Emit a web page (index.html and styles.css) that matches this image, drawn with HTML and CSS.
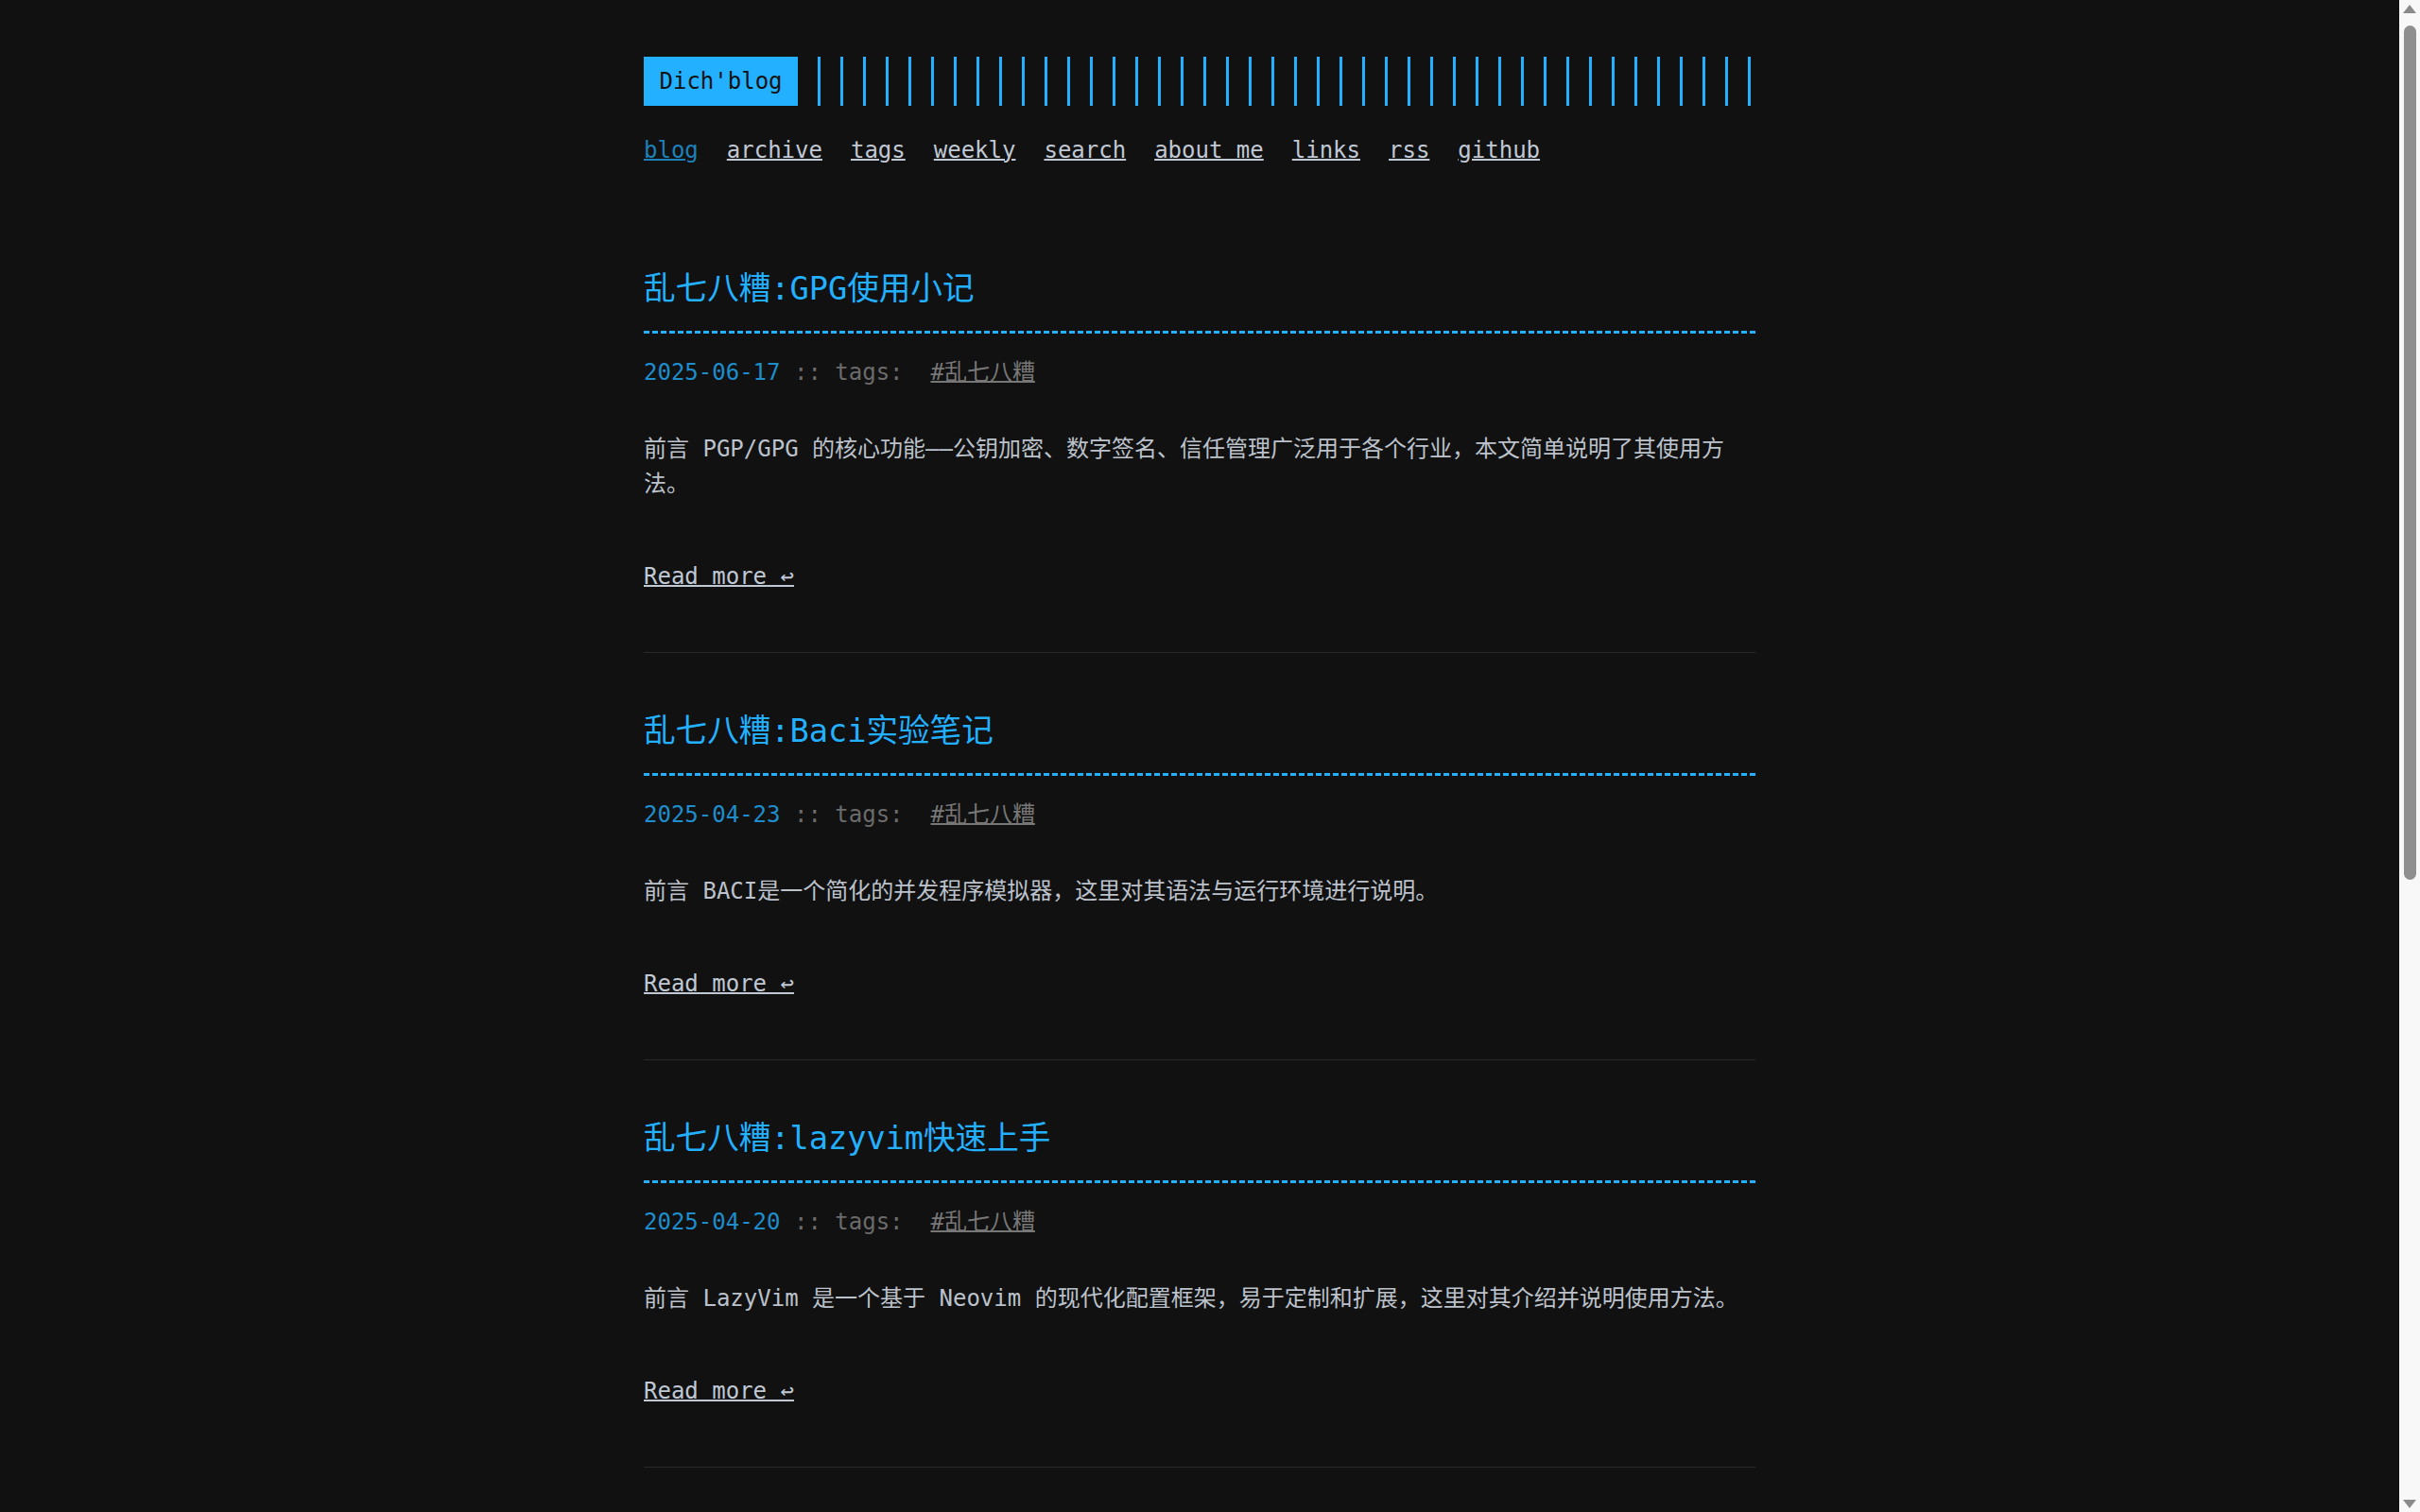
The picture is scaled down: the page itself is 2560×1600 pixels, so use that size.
FILE: index.html
```html
<!DOCTYPE html>
<html lang="zh-CN">
<head>
<meta charset="utf-8">
<title>Dich'blog</title>
<link rel="stylesheet" href="styles.css">
</head>
<body>
<div class="container">
  <header class="header">
    <div class="header__logo">
      <a class="logo" href="#">Dich'blog</a>
      <div class="header__bars"></div>
    </div>
    <nav class="menu">
      <ul class="menu__inner">
        <li><a class="active" href="#">blog</a></li>
        <li><a href="#">archive</a></li>
        <li><a href="#">tags</a></li>
        <li><a href="#">weekly</a></li>
        <li><a href="#">search</a></li>
        <li><a href="#">about me</a></li>
        <li><a href="#">links</a></li>
        <li><a href="#">rss</a></li>
        <li><a href="#">github</a></li>
      </ul>
    </nav>
  </header>

  <main class="posts">
    <article class="post">
      <h2 class="post-title"><a href="#">乱七八糟:GPG使用小记</a></h2>
      <div class="post-meta"><time class="post-date">2025-06-17</time> <span class="post-sep">:: tags:&nbsp;</span> <a class="post-tag" href="#">#乱七八糟</a></div>
      <div class="post-content"><p>前言 PGP/GPG 的核心功能——公钥加密、数字签名、信任管理广泛用于各个行业，本文简单说明了其使用方法。</p></div>
      <div class="read-more-row"><a class="read-more" href="#">Read more ↩</a></div>
    </article>

    <article class="post">
      <h2 class="post-title"><a href="#">乱七八糟:Baci实验笔记</a></h2>
      <div class="post-meta"><time class="post-date">2025-04-23</time> <span class="post-sep">:: tags:&nbsp;</span> <a class="post-tag" href="#">#乱七八糟</a></div>
      <div class="post-content"><p>前言 BACI是一个简化的并发程序模拟器，这里对其语法与运行环境进行说明。</p></div>
      <div class="read-more-row"><a class="read-more" href="#">Read more ↩</a></div>
    </article>

    <article class="post">
      <h2 class="post-title"><a href="#">乱七八糟:lazyvim快速上手</a></h2>
      <div class="post-meta"><time class="post-date">2025-04-20</time> <span class="post-sep">:: tags:&nbsp;</span> <a class="post-tag" href="#">#乱七八糟</a></div>
      <div class="post-content"><p>前言 LazyVim 是一个基于 Neovim 的现代化配置框架，易于定制和扩展，这里对其介绍并说明使用方法。</p></div>
      <div class="read-more-row"><a class="read-more" href="#">Read more ↩</a></div>
    </article>

    <article class="post">
      <h2 class="post-title"><a href="#">乱七八糟:Hugo博客搭建</a></h2>
      <div class="post-meta"><time class="post-date">2025-03-08</time> <span class="post-sep">:: tags:&nbsp;</span> <a class="post-tag" href="#">#乱七八糟</a></div>
      <div class="post-content"><p>前言 使用 Hugo 与 terminal 主题搭建个人博客，记录部署过程。</p></div>
      <div class="read-more-row"><a class="read-more" href="#">Read more ↩</a></div>
    </article>

    <article class="post">
      <h2 class="post-title"><a href="#">乱七八糟:Git常用命令</a></h2>
      <div class="post-meta"><time class="post-date">2025-02-14</time> <span class="post-sep">:: tags:&nbsp;</span> <a class="post-tag" href="#">#乱七八糟</a></div>
      <div class="post-content"><p>前言 整理日常开发中常用的 Git 命令与使用技巧。</p></div>
      <div class="read-more-row"><a class="read-more" href="#">Read more ↩</a></div>
    </article>
  </main>

  <div class="pagination">
    <a class="button" href="#">Older posts →</a>
  </div>

  <footer class="footer">
    <span>© 2025 Powered by <a href="#">Hugo</a></span>
    <span>:: <a href="#">Theme</a> made by <a href="#">panr</a></span>
  </footer>
</div>

<div class="scrollbar" aria-hidden="true">
  <div class="scrollbar__arrow scrollbar__arrow--up"></div>
  <div class="scrollbar__track">
    <div class="scrollbar__thumb"></div>
  </div>
  <div class="scrollbar__arrow scrollbar__arrow--down"></div>
</div>
</body>
</html>
```

FILE: styles.css
```css
* {
  box-sizing: border-box;
}

html {
  background: #111111;
}

body {
  margin: 0;
  padding-right: 22px;
  background: #111111;
  color: #c3c9d2;
  font-family: "DejaVu Sans Mono", "Noto Sans CJK SC", monospace;
  font-size: 24px;
  line-height: 1.54;
}

a {
  color: inherit;
  text-decoration: underline;
  text-decoration-thickness: 2px;
}

.container {
  width: 1176px;
  margin: 0 auto;
  padding: 60px 0;
}

/* header */
.header__logo {
  display: flex;
  height: 52px;
}

.logo {
  display: flex;
  align-items: center;
  padding: 0 16.5px;
  background: #23b0ff;
  color: #111111;
  text-decoration: none;
}

.header__bars {
  flex: 1;
  margin-left: 21px;
  background: repeating-linear-gradient(90deg, #23b0ff 0 3px, transparent 3px 24px);
}

.menu {
  margin-top: 29px;
}

.menu__inner {
  display: flex;
  flex-wrap: wrap;
  gap: 0 30px;
  list-style: none;
  margin: 0;
  padding: 0;
}

.menu__inner a {
  color: #c0c8d4;
}

.menu__inner a.active {
  color: #1e80b8;
}

/* posts */
.posts {
  margin-top: 45px;
}

.post {
  padding: 57px 0 61px;
  border-bottom: 1px solid #292929;
}

.post-title {
  margin: 0;
  padding-bottom: 21.3px;
  font-size: 33.6px;
  line-height: 1.54;
  font-weight: normal;
  color: #23b0ff;
  background: repeating-linear-gradient(90deg, #23b0ff 0 6px, transparent 6px 9px) left bottom / 100% 3px no-repeat;
}

.post-title a {
  text-decoration: none;
}

.post-meta {
  margin-top: 23px;
  color: #6b6b6b;
}

.post-date {
  color: #1f8dcb;
}

.post-tag {
  color: #777777;
}

.post-content {
  margin-top: 44px;
}

.post-content p {
  margin: 0;
  color: #bcc2cb;
}

.read-more-row {
  margin-top: 61px;
}

.read-more {
  color: #c0c8d4;
}

/* pagination / footer */
.pagination {
  margin-top: 60px;
}

.button {
  display: inline-block;
  padding: 8px 20px;
  border: 1px solid #23b0ff;
  color: #23b0ff;
  text-decoration: none;
}

.footer {
  display: flex;
  gap: 14px;
  margin-top: 60px;
  color: #6b6b6b;
  font-size: 21px;
}

/* browser scrollbar (overlay at the window edge) */
.scrollbar {
  position: fixed;
  top: 0;
  right: 0;
  width: 22px;
  height: 100vh;
  display: flex;
  flex-direction: column;
  background: #f8f8f8;
}

.scrollbar__arrow {
  height: 22px;
  display: flex;
  justify-content: center;
  align-items: center;
}

.scrollbar__arrow--up::before,
.scrollbar__arrow--down::before {
  content: "";
  width: 0;
  height: 0;
  border-left: 7px solid transparent;
  border-right: 7px solid transparent;
}

.scrollbar__arrow--up::before {
  border-bottom: 9px solid #8a8a8a;
  margin-top: -4px;
}

.scrollbar__arrow--down::before {
  border-top: 9px solid #8a8a8a;
  margin-bottom: -4px;
}

.scrollbar__track {
  flex: 1;
  padding: 5px 4px 0 5px;
}

.scrollbar__thumb {
  height: 904px;
  border-radius: 7px;
  background: #8f8f8f;
}
```
